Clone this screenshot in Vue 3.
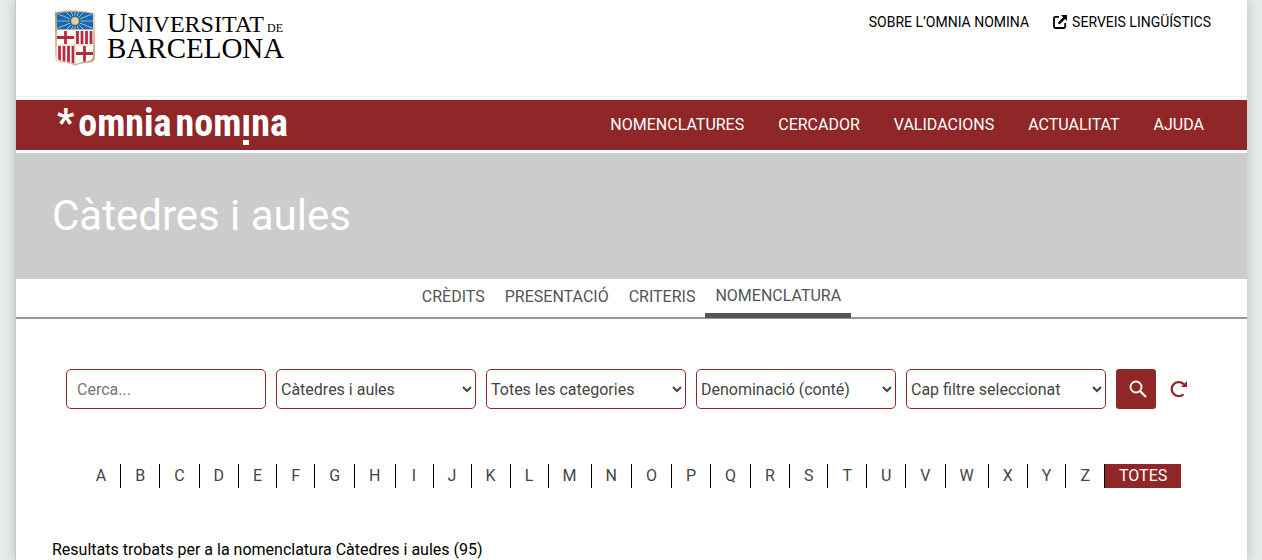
<script setup>
import { ref } from 'vue'

const menu = ['Nomenclatures', 'Cercador', 'Validacions', 'Actualitat', 'Ajuda']
const tabs = ['Crèdits', 'Presentació', 'Criteris', 'Nomenclatura']
const filters = [
  { label: 'Nomenclatura', value: 'Càtedres i aules' },
  { label: 'Categoria', value: 'Totes les categories' },
  { label: 'Camp de cerca', value: 'Denominació (conté)' },
  { label: 'Filtre', value: 'Cap filtre seleccionat' }
]
const letters = [...'ABCDEFGHIJKLMNOPQRSTUVWXYZ']
const rays = Array.from({ length: 16 }, (_, i) => i * 22.5)
const query = ref('')
</script>

<template>
  <div class="page">
    <header class="top">
      <a class="brand" href="#" aria-label="Universitat de Barcelona">
        <svg class="shield" viewBox="0 0 40 56" aria-hidden="true">
          <defs>
            <linearGradient id="gold" x1="0" y1="0" x2="1" y2="1">
              <stop offset="0" stop-color="#a98f68" />
              <stop offset="0.5" stop-color="#efe2c8" />
              <stop offset="1" stop-color="#b79a70" />
            </linearGradient>
            <clipPath id="field">
              <path d="M2 3.500Q20 0 38 3.500V46Q38 51 30 51.500Q24 52 20 54Q16 52 10 51.500Q2 51 2 46Z" />
            </clipPath>
          </defs>
          <path d="M0 2.500Q20-2 40 2.500V47Q40 53 31 53Q24 53.500 20 56Q16 53.500 9 53Q0 53 0 47Z" fill="url(#gold)" />
          <g clip-path="url(#field)">
            <rect x="2" width="36" height="20" fill="#1769b5" />
            <g stroke="#b9cbbd" stroke-width="0.8">
              <line v-for="r in rays" :key="r" x1="20" y1="5.500" x2="20" y2="-8" :transform="`rotate(${r} 20 11)`" />
            </g>
            <circle cx="20" cy="11" r="4" fill="#e6cf9d" stroke="#a98f57" stroke-width="0.6" />
            <rect x="2" y="20" width="36" height="36" fill="#fff" />
            <path d="M10.500 21V34M2 27.500H19M29.500 36V52M21 43.500H38" stroke="#bd2740" stroke-width="2.800" />
            <path d="M22.500 21V34M27 21V34M31.500 21V34M36 21V34M4.500 36V54M9 36V54M13.500 36V54M18 36V54" stroke="#bd2740" stroke-width="2.800" />
            <path d="M2 19.800H38M2 35H38M20 20V54" stroke="#dfd0b3" stroke-width="1" />
          </g>
        </svg>
        <span class="wordmark">
          <span class="uni"><span class="cap">U</span>NIVERSITAT<small>DE</small></span>
          <span class="bcn">BARCELONA</span>
        </span>
      </a>
      <nav class="links">
        <a href="#">SOBRE L’OMNIA NOMINA</a>
        <a href="#" class="external">
          <svg viewBox="0 0 14 14" aria-hidden="true">
            <path d="M6 1.800H2.500Q1 1.800 1 3.300V11.500Q1 13 2.500 13H10.700Q12.200 13 12.200 11.500V8" fill="none" stroke="currentColor" stroke-width="1.800" />
            <path d="M8 0H14V6L12 4L6.500 9.500L4.700 7.700L10.200 2.200Z" fill="currentColor" />
          </svg>SERVEIS LINGÜÍSTICS
        </a>
      </nav>
    </header>

    <div class="bar">
      <a class="omnia" href="#"><span class="star">*</span><span>omnia</span><span>nom<span class="low">ı</span>na</span></a>
      <nav class="menu">
        <a v-for="m in menu" :key="m" href="#">{{ m }}</a>
      </nav>
    </div>

    <div class="hero"><h1>Càtedres i aules</h1></div>

    <nav class="tabs">
      <a v-for="(t, i) in tabs" :key="t" href="#" :class="{ active: i === 3 }">{{ t }}</a>
    </nav>

    <main>
      <form class="search" @submit.prevent>
        <input v-model="query" type="text" placeholder="Cerca..." aria-label="Cerca" />
        <select v-for="f in filters" :key="f.label" :aria-label="f.label">
          <option>{{ f.value }}</option>
        </select>
        <button class="go" type="submit" aria-label="Cercar">
          <svg viewBox="0 0 18 18" fill="none" stroke="currentColor" aria-hidden="true">
            <circle cx="7" cy="7" r="5.500" stroke-width="1.800" />
            <path d="M11 11L17 17" stroke-width="2.200" />
          </svg>
        </button>
        <button class="reset" type="reset" aria-label="Reinicia">
          <svg viewBox="0 0 18 18" aria-hidden="true">
            <path d="M13.500 14.200A7 7 0 1 1 14 4.500" fill="none" stroke="currentColor" stroke-width="2.200" />
            <path d="M17 1V7H11Z" fill="currentColor" />
          </svg>
        </button>
      </form>

      <nav class="letters" aria-label="Índex alfabètic">
        <a v-for="l in letters" :key="l" href="#">{{ l }}</a>
        <a href="#" class="all">TOTES</a>
      </nav>

      <p class="results">Resultats trobats per a la nomenclatura Càtedres i aules (95)</p>
    </main>
  </div>
</template>

<style>
body {
  background: #e7ebec;
}
html {
  overflow: hidden;
}
</style>

<style scoped>
.page {
  box-sizing: border-box;
  margin: 0 15px;
  min-height: 100vh;
  border-left: 1px solid #c4c6c7;
  background: #fff;
  box-shadow: 0 0 12px rgba(0, 0, 0, 0.2);
  font: 16px/24px Roboto, "Liberation Sans", sans-serif;
  color: #000;
}
a {
  color: inherit;
  text-decoration: none;
}
.top {
  display: flex;
  justify-content: space-between;
  align-items: flex-start;
  box-sizing: border-box;
  height: 97px;
  padding: 10px 36px 0 39px;
  border-bottom: 1px solid #ebebeb;
}
.brand {
  display: flex;
  gap: 12px;
}
.shield {
  width: 40px;
  height: 56px;
}
.wordmark {
  display: flex;
  flex-direction: column;
  font-family: "Liberation Serif", serif;
  line-height: 20px;
  padding-top: 3px;
}
.uni {
  font-size: 24px;
}
.cap {
  font-size: 28px;
}
.uni small {
  font-size: 12px;
  margin-left: 3px;
}
.bcn {
  font-size: 29px;
}
.links {
  display: flex;
  gap: 24px;
  font-size: 14px;
}
.external {
  display: flex;
  align-items: center;
  gap: 5px;
}
.external svg {
  width: 14px;
  height: 14px;
}
.bar {
  display: flex;
  justify-content: space-between;
  align-items: center;
  height: 50px;
  margin: 3px 0;
  padding: 0 43px 0 41px;
  background: #8f2728;
  color: #fff;
}
.omnia {
  display: flex;
  gap: 4px;
  padding-bottom: 4px;
  font: bold 38px/46px "Roboto Condensed", "Liberation Sans Narrow", Roboto, sans-serif;
}
.low {
  position: relative;
}
.low::after {
  content: "";
  position: absolute;
  left: 2px;
  bottom: 0;
  width: 6px;
  height: 5px;
  background: currentColor;
}
.menu {
  display: flex;
  gap: 34px;
  text-transform: uppercase;
}
.hero {
  display: flex;
  align-items: center;
  height: 126px;
  padding: 0 36px;
  background: #ccc;
  color: #fff;
}
h1 {
  margin: 0;
  font-size: 42px;
  line-height: 50px;
  font-weight: 400;
}
.tabs {
  display: flex;
  justify-content: center;
  height: 38px;
  border-bottom: 2px solid #999;
  color: #555;
  text-transform: uppercase;
}
.tabs a {
  padding: 6px 10px 0;
}
.tabs .active {
  height: 29px;
  padding-top: 5px;
  border-bottom: 5px solid #555;
}
main {
  padding: 50px 36px 0;
}
.search {
  display: flex;
  gap: 10px;
  padding: 0 14px;
}
.search input,
.search select {
  box-sizing: border-box;
  flex: 0 1 200px;
  min-width: 0;
  height: 40px;
  border: 1px solid #8f2728;
  border-radius: 5px;
  background: #fff;
  color: #444;
  font: inherit;
}
.search input {
  padding: 0 10px;
}
.search input::placeholder {
  color: #757575;
}
.search button {
  display: grid;
  place-items: center;
  height: 40px;
  padding: 0;
  border: 0;
  border-radius: 3px;
}
.search svg {
  width: 18px;
  height: 18px;
}
.search .go {
  width: 40px;
  padding-left: 4px;
  background: #8f2728;
  color: #fff;
}
.search .reset {
  width: 26px;
  background: none;
  color: #8f2728;
}
.letters {
  display: flex;
  justify-content: center;
  margin-top: 55px;
  color: #444;
}
.letters a {
  box-sizing: border-box;
  min-width: 38px;
  padding: 0 14px;
  border-right: 1px solid #000;
  text-align: center;
}
.letters .all {
  border-right: 0;
  background: #8f2728;
  color: #fff;
}
.results {
  margin: 50px 0 0;
}
</style>
